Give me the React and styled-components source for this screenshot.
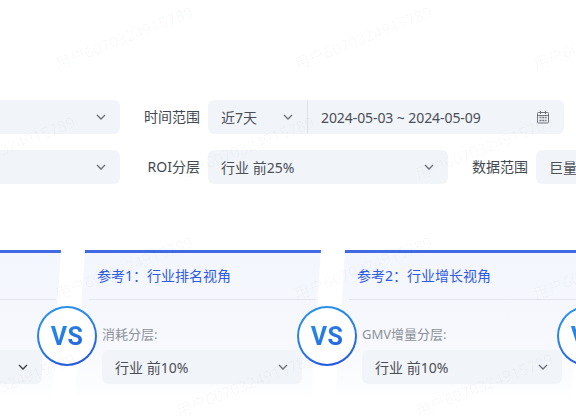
import React from "react";
import styled, { createGlobalStyle } from "styled-components";

const Global = createGlobalStyle`
  html, body { margin: 0; padding: 0; background: #fff; overflow: hidden; }
  body { width: 576px; height: 420px; font-family: "Noto Sans", "Noto Sans CJK SC", sans-serif; }
`;
const Page = styled.div`
  position: relative;
  width: 576px;
  height: 420px;
  overflow: hidden;
  padding-top: 100px;
  box-sizing: border-box;
`;
const Filters = styled.div`
  display: flex;
  flex-direction: column;
  gap: 16px;
  margin-left: -80px;
`;
const FilterRow = styled.div`
  display: flex;
  align-items: center;
  gap: 24px;
  width: 900px;
`;
const Field = styled.div`
  display: flex;
  align-items: center;
  gap: 8px;
`;
const Label = styled.span`
  width: 56px;
  text-align: right;
  font-size: 14px;
  line-height: 20px;
  color: #43484f;
  white-space: nowrap;
`;
const Select = styled.div`
  display: flex;
  align-items: center;
  justify-content: space-between;
  box-sizing: border-box;
  width: ${(p) => p.$w}px;
  height: 34px;
  padding: 0 14px 0 13px;
  background: #f1f4f9;
  border-radius: ${(p) => p.$radius || "6px"};
  font-size: 14px;
  color: #4a4e55;
  white-space: nowrap;
`;
const DateBox = styled(Select)`
  border-left: 1px solid #dde1e8;
  padding-left: 13px;
  letter-spacing: -0.08px;
`;
const Joined = styled.div`
  display: flex;
`;
const Cards = styled.div`
  display: flex;
  gap: 14px;
  margin: 66px 0 0 -185px;
  width: 1100px;
`;
const Slot = styled.div`
  position: relative;
  width: 246px;
  flex: none;
  z-index: ${(p) => p.$z};
`;
const Card = styled.div`
  height: 152px;
  box-sizing: border-box;
  border-top: 3px solid #4169e1;
  background: linear-gradient(180deg, #f3f6fd 0%, #f6f8fd 55%, #fbfcfe 85%, #ffffff 100%);
  clip-path: polygon(10px 0, 100% 0, calc(100% - 10px) 100%, 0 100%);
`;
const CardHead = styled.div`
  height: 44px;
  padding: 0 0 2px 8px;
  margin: 0 5px 0 14px;
  display: flex;
  align-items: center;
  border-bottom: 1px solid #e2e5ec;
  font-size: 14px;
  color: #2f5be2;
  white-space: nowrap;
`;
const CardBody = styled.div`
  padding: 25px 0 0 27px;
`;
const SmallLabel = styled.div`
  font-size: 13px;
  line-height: 18px;
  color: #8c9199;
  margin-bottom: 7px;
  white-space: nowrap;
`;
const Vs = styled.div`
  position: absolute;
  left: 222px;
  top: 56px;
  width: 60px;
  height: 60px;
  box-sizing: border-box;
  border-radius: 50%;
  border: 2px solid transparent;
  background: linear-gradient(#fff, #fff) padding-box,
    linear-gradient(160deg, #2a97ea 0%, #2a7de6 50%, #2350dc 100%) border-box;
  display: flex;
  align-items: center;
  justify-content: center;
`;
const VsText = styled.span`
  font-family: Roboto, "Noto Sans", sans-serif;
  font-size: 25px;
  font-weight: 700;
  letter-spacing: 0.5px;
  background: linear-gradient(135deg, #2390ea, #2b5fdc);
  -webkit-background-clip: text;
  background-clip: text;
  color: transparent;
`;
const Marks = styled.div`
  position: absolute;
  inset: 0;
  pointer-events: none;
  z-index: 50;
`;
const Mark = styled.span`
  position: absolute;
  font-size: 15.5px;
  line-height: 1;
  color: rgba(30, 30, 40, 0.035);
  white-space: nowrap;
  transform-origin: 0 100%;
  transform: rotate(-21.5deg);
`;

const Chevron = ({ color = "#6b6f76" }) => (
  <svg width="10" height="6" viewBox="0 0 10 6" fill="none">
    <path d="M1 1l4 4 4-4" stroke={color} strokeWidth="1.3" />
  </svg>
);
const Calendar = () => (
  <svg width="14" height="14" viewBox="0 0 14 14" fill="none" stroke="#6f737a" strokeWidth="1">
    <rect x="1.5" y="2.5" width="11" height="10.5" rx="1" />
    <path d="M1.5 5.5h11M4.5 1v3M9.5 1v3" />
    <path d="M3.5 7.5h7M3.5 10.5h7" strokeWidth="1.6" strokeDasharray="2 .8" />
  </svg>
);

const cards = [
  { title: "参考", field: "消耗分层", chev: "#3c3f44" },
  { title: "参考1：行业排名视角", field: "消耗分层" },
  { title: "参考2：行业增长视角", field: "GMV增量分层" },
];

const marks = [];
[[73, 59], [183, 180], [303, 59], [420, 180]].forEach(([y, x]) => {
  for (let k = -1; k < 3; k++) marks.push({ y, x: x + k * 239 });
});

export default function App() {
  return (
    <Page>
      <Global />
      <Filters>
        <FilterRow>
          <Select $w={200}>
            <span />
            <Chevron />
          </Select>
          <Field>
            <Label>时间范围</Label>
            <Joined>
              <Select $w={99} $radius="6px 0 0 6px">
                近7天
                <Chevron />
              </Select>
              <DateBox $w={257} $radius="0 6px 6px 0">
                2024-05-03 ~ 2024-05-09
                <Calendar />
              </DateBox>
            </Joined>
          </Field>
        </FilterRow>
        <FilterRow>
          <Select $w={200}>
            <span />
            <Chevron />
          </Select>
          <Field>
            <Label>ROI分层</Label>
            <Select $w={240}>
              行业 前25%
              <Chevron />
            </Select>
          </Field>
          <Field>
            <Label>数据范围</Label>
            <Select $w={200}>
              巨量
              <Chevron />
            </Select>
          </Field>
        </FilterRow>
      </Filters>
      <Cards>
        {cards.map((c, i) => (
          <Slot key={i} $z={10 - i}>
            <Card>
              <CardHead>{c.title}</CardHead>
              <CardBody>
                <SmallLabel>{c.field}:</SmallLabel>
                <Select $w={200}>
                  行业 前10%
                  <Chevron color={c.chev} />
                </Select>
              </CardBody>
            </Card>
            <Vs>
              <VsText>VS</VsText>
            </Vs>
          </Slot>
        ))}
      </Cards>
      <Marks>
        {marks.map((m, i) => (
          <Mark key={i} style={{ left: m.x, top: m.y - 16 }}>
            用户6070324915789
          </Mark>
        ))}
      </Marks>
    </Page>
  );
}
